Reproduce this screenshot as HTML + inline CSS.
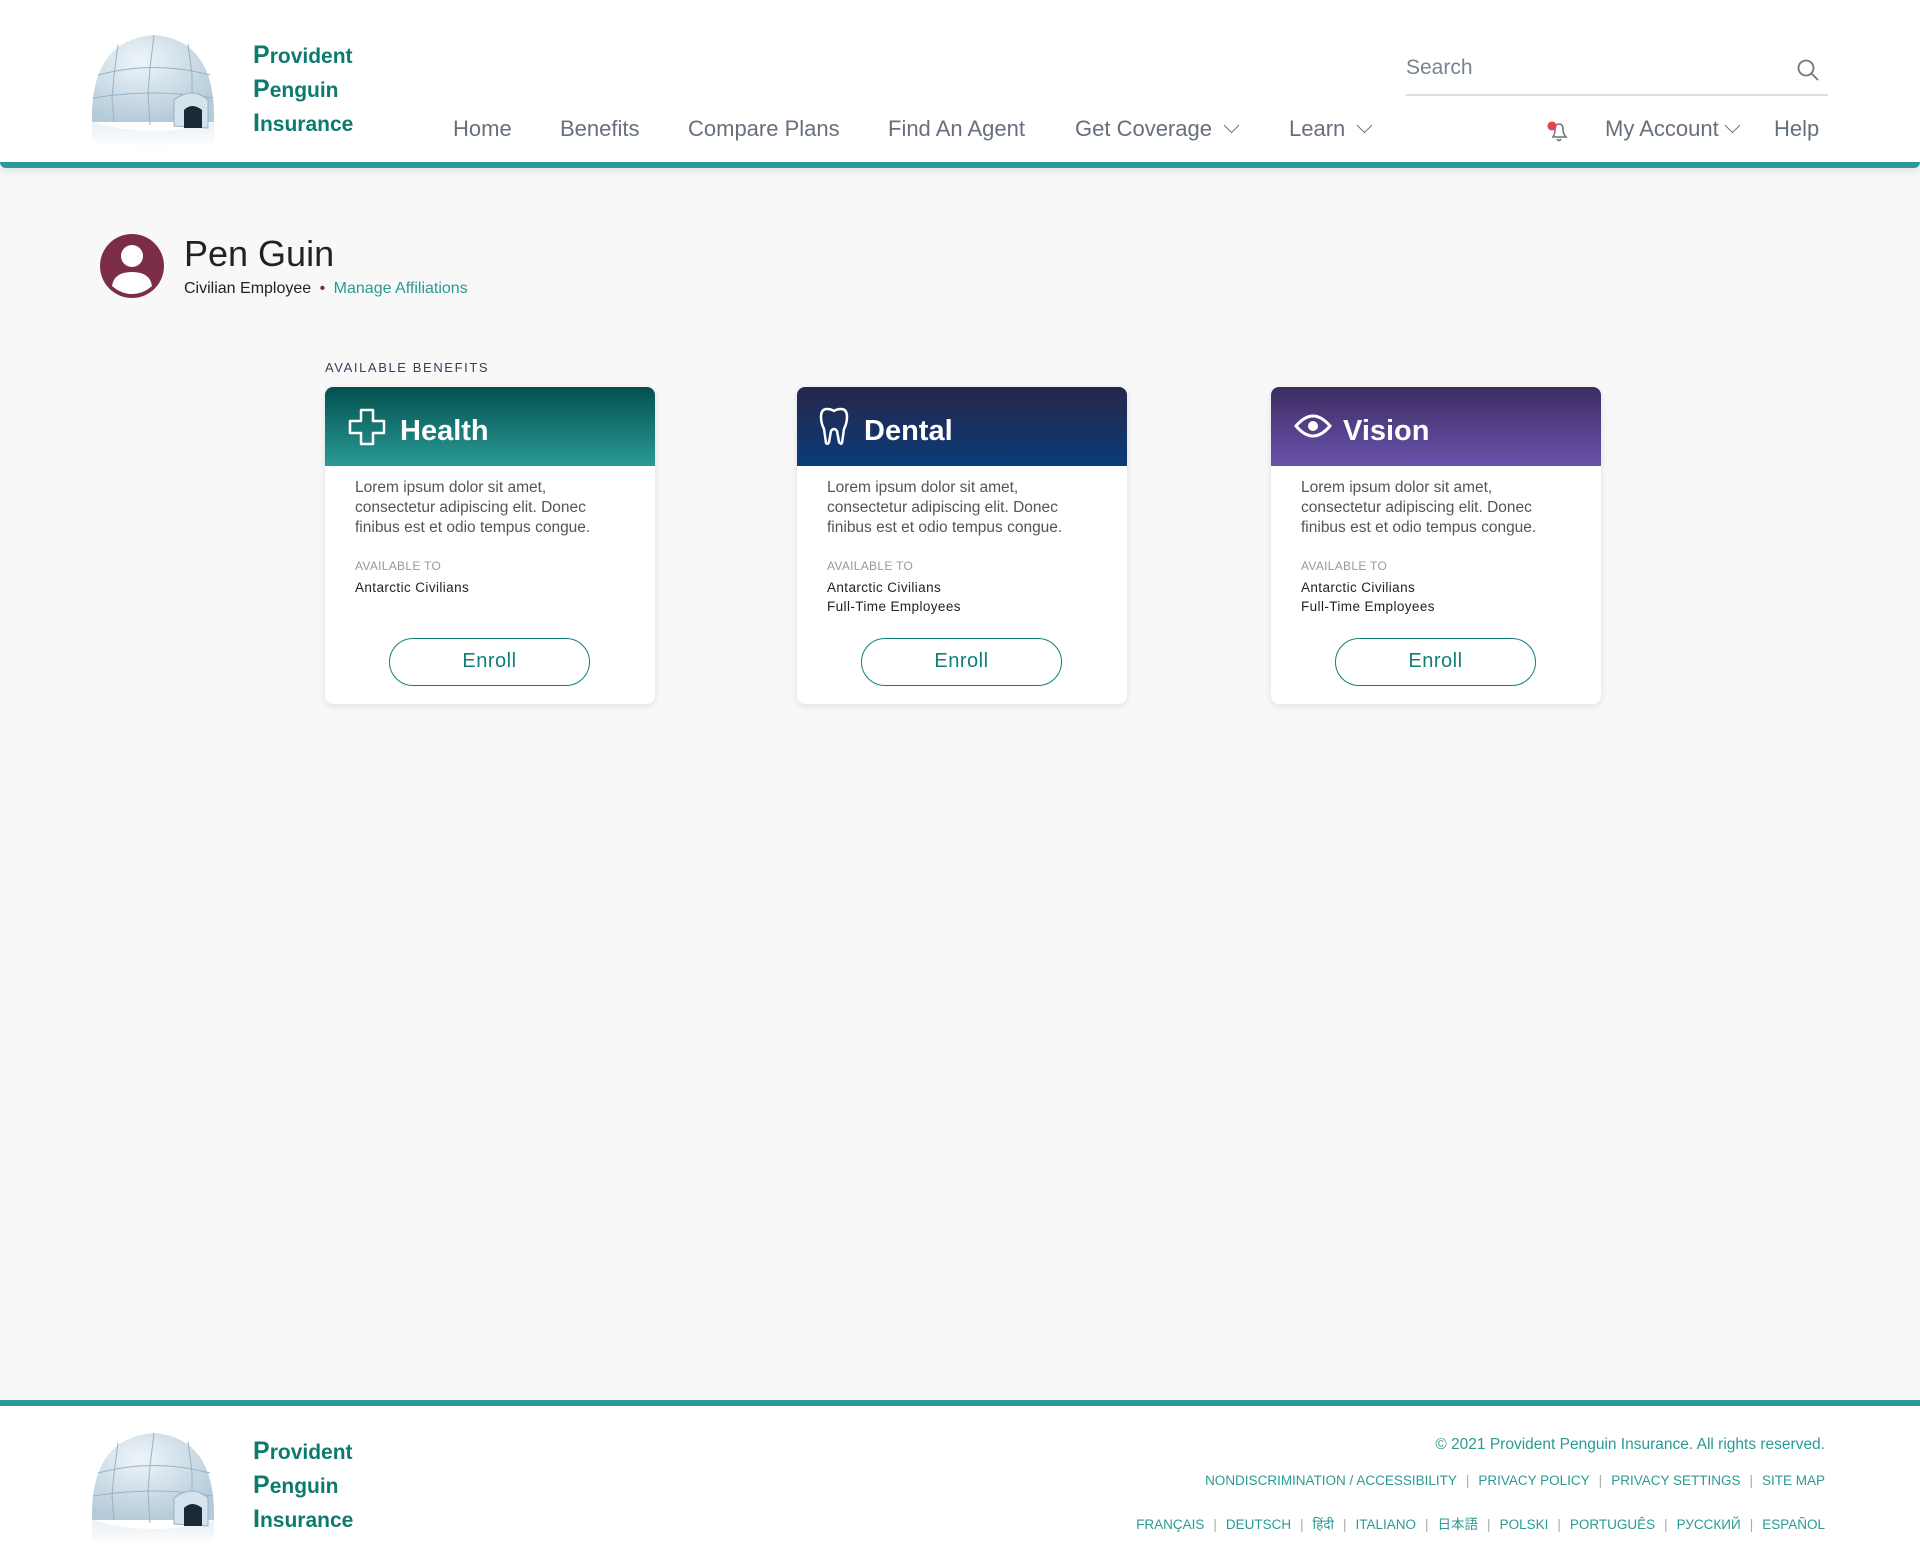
<!DOCTYPE html>
<html><head><meta charset="utf-8"><style>
*{margin:0;padding:0;box-sizing:border-box}
body{width:1920px;height:1566px;background:#f8f8f8;font-family:"Liberation Sans","Noto Sans CJK JP",sans-serif;position:relative;overflow:hidden}
.abs{position:absolute}
header{position:absolute;left:0;top:0;width:1920px;height:168px;background:#fff;border-bottom:6px solid #2c9a98;border-radius:0 0 6px 6px;box-shadow:0 4px 8px rgba(0,0,0,.08)}
.logotxt{position:absolute;color:#0d7a70;font-weight:bold;font-size:21px;line-height:32px}
.logotxt b{font-size:25px}
.nav{position:absolute;top:116px;font-size:22px;color:#66707c;white-space:nowrap}
.chev{display:inline-block;width:11px;height:11px;border-right:1.5px solid #66707c;border-bottom:1.5px solid #66707c;transform:rotate(45deg);margin-left:14px;position:relative;top:-5px}
.card{position:absolute;top:387px;width:330px;height:317px;background:#fff;border-radius:8px;box-shadow:0 2px 8px rgba(0,0,0,.1);overflow:hidden}
.ch{height:79px;position:relative;color:#fff}
.ch span{position:absolute;top:28px;font-size:29px;font-weight:bold}
.ch svg{position:absolute}
.cb{padding:12px 30px 0 30px}
.lor{font-size:15.5px;line-height:20px;color:#555;width:270px}
.av{font-size:12px;color:#999;margin-top:21px;letter-spacing:.3px}
.at{font-size:13.5px;color:#222;line-height:19px;margin-top:5px;letter-spacing:.4px}
.btn{position:absolute;left:64px;top:251px;width:201px;height:48px;border:1.5px solid #0f7f7a;border-radius:24px;text-align:center;line-height:45px;font-size:20px;color:#0f7f7a;letter-spacing:.5px}
footer{position:absolute;left:0;top:1400px;width:1920px;height:166px;background:#fff;border-top:6px solid #2c9a98}
.fl{position:absolute;right:95px;color:#2a9a94;white-space:nowrap;text-align:right}
.fl i{font-style:normal;color:#aaa;margin:0 9px}
</style></head><body>
<svg width="0" height="0" style="position:absolute"><defs><radialGradient id="ig" cx="40%" cy="30%" r="70%"><stop offset="0" stop-color="#eef5fa"/><stop offset="1" stop-color="#b6cbd9"/></radialGradient><linearGradient id="rf" x1="0" y1="0" x2="0" y2="1"><stop offset="0" stop-color="#dfe9f0"/><stop offset="1" stop-color="#fff"/></linearGradient></defs></svg>
<header>
<svg class="abs" style="left:88px;top:30px" width="135" height="125" viewBox="0 0 135 125">
<path d="M4 92 Q2 10 66 5 Q128 10 126 92 Z" fill="url(#ig)"/>
<path d="M4 92 Q66 110 126 92 L126 112 Q66 125 4 112Z" fill="url(#rf)" opacity=".7"/>
<g stroke="#98b2c4" stroke-width="1" fill="none"><path d="M10 45 Q66 30 122 45"/><path d="M5 68 Q66 58 125 68"/><path d="M30 15 L26 45 L24 68 L26 92"/><path d="M66 5 L62 38 L60 64 L62 95"/><path d="M100 14 L104 44 L104 66"/></g>
<path d="M86 96 L86 70 Q104 56 120 70 L120 98Z" fill="#d5e3ec" stroke="#98b2c4"/>
<path d="M96 98 L96 80 Q104 72 114 80 L114 98Z" fill="#1b2a36"/>
</svg>
<div class="logotxt" style="left:253px;top:39px"><b>P</b>rovident<br><b>P</b>enguin<br><b>I</b>nsurance</div>
<div class="nav" style="left:453px">Home</div>
<div class="nav" style="left:560px">Benefits</div>
<div class="nav" style="left:688px">Compare Plans</div>
<div class="nav" style="left:888px">Find An Agent</div>
<div class="nav" style="left:1075px">Get Coverage<span class="chev"></span></div>
<div class="nav" style="left:1289px">Learn<span class="chev"></span></div>
<div class="abs" style="left:1406px;top:56px;font-size:21px;color:#7a8490">Search</div>
<svg class="abs" style="left:1796px;top:58px" width="24" height="24" viewBox="0 0 24 24" fill="none" stroke="#707880" stroke-width="1.8"><circle cx="10" cy="10" r="7.5"/><path d="M15.5 15.5L22 22"/></svg>
<div class="abs" style="left:1406px;top:94px;width:422px;height:2px;background:#ddd"></div>
<svg class="abs" style="left:1545px;top:120px" width="26" height="24" viewBox="0 0 26 24" fill="none" stroke="#777" stroke-width="1.6"><path d="M8 17 Q10 14 10 9 Q10 4 14 4 Q18 4 18 9 Q18 14 21 17 Z"/><path d="M12 19 Q14 22 16 19"/><circle cx="7" cy="6" r="4.5" fill="#e8404e" stroke="none"/></svg>
<div class="nav" style="left:1605px">My Account<span class="chev" style="margin-left:8px"></span></div>
<div class="nav" style="left:1774px">Help</div>
</header>

<svg class="abs" style="left:100px;top:234px" width="64" height="64" viewBox="0 0 64 64"><circle cx="32" cy="32" r="32" fill="#7b2d45"/><circle cx="32" cy="22" r="11" fill="#fff"/><path d="M12 52 Q14 38 32 38 Q50 38 52 52 Q43 60 32 60 Q21 60 12 52Z" fill="#fff"/></svg>
<div class="abs" style="left:184px;top:233px;font-size:36px;color:#222">Pen Guin</div>
<div class="abs" style="left:184px;top:280px;font-size:16px;color:#222">Civilian Employee <span style="color:#7b2d45;margin:0 4px">•</span> <span style="color:#2a9a94">Manage Affiliations</span></div>
<div class="abs" style="left:325px;top:360px;font-size:13px;color:#3d3d5c;letter-spacing:1.6px">AVAILABLE BENEFITS</div>

<div class="card" style="left:325px">
<div class="ch" style="background:linear-gradient(#03504f,#2b9a95)">
<svg style="left:23px;top:21px" width="38" height="38" viewBox="0 0 38 38" fill="none" stroke="#fff" stroke-width="2.5" stroke-linejoin="round"><path d="M13 2H25V13H36V25H25V36H13V25H2V13H13Z"/></svg>
<span style="left:75px">Health</span></div>
<div class="cb"><div class="lor">Lorem ipsum dolor sit amet, consectetur adipiscing elit. Donec finibus est et odio tempus congue.</div>
<div class="av">AVAILABLE TO</div><div class="at">Antarctic Civilians</div></div>
<div class="btn">Enroll</div></div>

<div class="card" style="left:797px">
<div class="ch" style="background:linear-gradient(#27264a,#0a3c79)">
<svg style="left:22px;top:20px" width="30" height="40" viewBox="0 0 30 40" fill="none" stroke="#fff" stroke-width="2.5" stroke-linejoin="round"><path d="M8 2 Q2 2 2 10 Q2 16 5 22 L7 36 Q9 38 10 35 L12 24 Q15 20 18 24 L20 35 Q22 38 23 36 L25 22 Q28 16 28 10 Q28 2 22 2 Q18 2 15 4 Q12 2 8 2Z"/></svg>
<span style="left:67px">Dental</span></div>
<div class="cb"><div class="lor">Lorem ipsum dolor sit amet, consectetur adipiscing elit. Donec finibus est et odio tempus congue.</div>
<div class="av">AVAILABLE TO</div><div class="at">Antarctic Civilians<br>Full-Time Employees</div></div>
<div class="btn">Enroll</div></div>

<div class="card" style="left:1271px">
<div class="ch" style="background:linear-gradient(#3c2d62,#6a52ad)">
<svg style="left:23px;top:27px" width="38" height="24" viewBox="0 0 38 24" fill="none" stroke="#fff" stroke-width="3"><path d="M2 12 Q19 -8 36 12 Q19 32 2 12Z"/><circle cx="19" cy="12" r="5" fill="#fff" stroke="none"/></svg>
<span style="left:72px">Vision</span></div>
<div class="cb"><div class="lor">Lorem ipsum dolor sit amet, consectetur adipiscing elit. Donec finibus est et odio tempus congue.</div>
<div class="av">AVAILABLE TO</div><div class="at">Antarctic Civilians<br>Full-Time Employees</div></div>
<div class="btn">Enroll</div></div>

<footer>
<svg class="abs" style="left:88px;top:22px" width="135" height="125" viewBox="0 0 135 125">
<path d="M4 92 Q2 10 66 5 Q128 10 126 92 Z" fill="url(#ig)"/>
<path d="M4 92 Q66 110 126 92 L126 112 Q66 125 4 112Z" fill="url(#rf)" opacity=".7"/>
<g stroke="#98b2c4" stroke-width="1" fill="none"><path d="M10 45 Q66 30 122 45"/><path d="M5 68 Q66 58 125 68"/><path d="M30 15 L26 45 L24 68 L26 92"/><path d="M66 5 L62 38 L60 64 L62 95"/><path d="M100 14 L104 44 L104 66"/></g>
<path d="M86 96 L86 70 Q104 56 120 70 L120 98Z" fill="#d5e3ec" stroke="#98b2c4"/>
<path d="M96 98 L96 80 Q104 72 114 80 L114 98Z" fill="#1b2a36"/>
</svg>
<div class="logotxt" style="left:253px;top:29px"><b>P</b>rovident<br><b>P</b>enguin<br><b>I</b>nsurance</div>
<div class="fl" style="top:30px;font-size:15.5px">© 2021 Provident Penguin Insurance. All rights reserved.</div>
<div class="fl" style="top:67px;font-size:13.5px">NONDISCRIMINATION / ACCESSIBILITY<i>|</i>PRIVACY POLICY<i>|</i>PRIVACY SETTINGS<i>|</i>SITE MAP</div>
<div class="fl" style="top:107px;font-size:13.5px">FRANÇAIS<i>|</i>DEUTSCH<i>|</i>हिंदी<i>|</i>ITALIANO<i>|</i>日本語<i>|</i>POLSKI<i>|</i>PORTUGUÊS<i>|</i>РУССКИЙ<i>|</i>ESPAÑOL</div>
</footer>
</body></html>
